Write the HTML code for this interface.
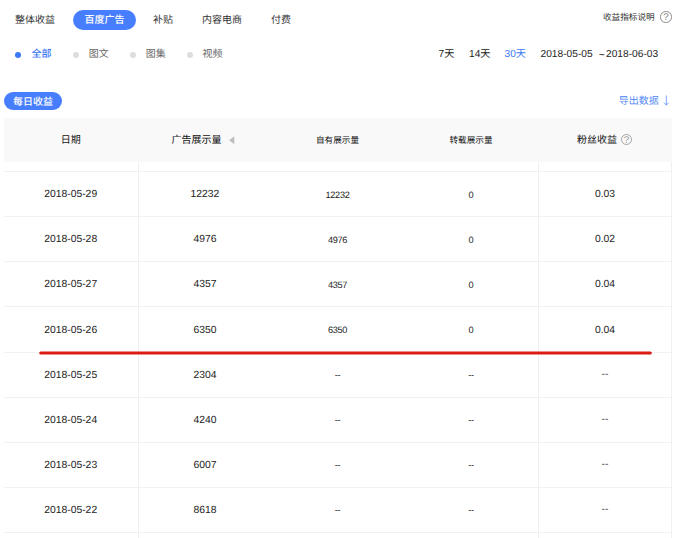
<!DOCTYPE html>
<html><head><meta charset="utf-8">
<style>
html,body{margin:0;padding:0;background:#fff;}
body{width:682px;height:538px;overflow:hidden;position:relative;font-family:"Liberation Sans","Noto Sans CJK SC",sans-serif;color:#333;font-size:10px;text-rendering:geometricPrecision;}
.abs{position:absolute;white-space:nowrap;}
.tab{top:13px;height:16px;line-height:16px;font-size:10px;color:#333;}
.tabsel{top:10px;left:73px;width:63px;height:20px;line-height:22px;font-weight:500;border-radius:10px;background:#477efd;color:#fff;text-align:center;font-size:10px;}
.sub{top:47.3px;height:16px;line-height:16px;font-size:10px;color:#666;}
.dot{position:absolute;width:6px;height:6px;border-radius:50%;background:#ddd;top:51.8px;}
.rng{top:47.3px;font-size:10.2px;line-height:16px;color:#222;}
.hdr{position:absolute;left:4px;top:118px;width:668px;height:44px;background:#f9f9f9;}
.th{position:absolute;top:118.8px;height:44px;line-height:44px;text-align:center;font-size:10px;color:#111;white-space:nowrap;font-weight:400;}
.th.sm{font-weight:400;font-size:8.6px;margin-top:-0.5px;}
.row{position:absolute;left:4px;width:668px;height:1px;background:#f1f1f1;}
.vl{position:absolute;top:162px;width:1px;height:376px;background:#f0f0f0;}
.td{position:absolute;text-align:center;color:#222;font-size:10.35px;}
.td.sm{font-size:9.2px;margin-top:-0.4px;letter-spacing:-0.3px;}
.td.hy{margin-top:-1px;color:#444;}
.td.sm.hs{margin-top:-1px;}
.q{position:absolute;width:9.4px;height:9.4px;border:0.7px solid #8c8c8c;border-radius:50%;font-size:9.8px;line-height:11px;text-align:center;color:#808080;}
</style></head><body>
<div class="abs tab" style="left:15px">整体收益</div>
<div class="abs tabsel">百度广告</div>
<div class="abs tab" style="left:153px">补贴</div>
<div class="abs tab" style="left:202px">内容电商</div>
<div class="abs tab" style="left:271px">付费</div>
<div class="abs" style="left:603px;top:10px;font-size:8.6px;color:#333;line-height:14px">收益指标说明</div>
<div class="q" style="left:660.2px;top:11.4px">?</div>

<div class="dot" style="left:15px;background:#3c78f5"></div>
<div class="abs sub" style="left:31.5px;color:#3c78f5;font-weight:500">全部</div>
<div class="dot" style="left:72.5px"></div>
<div class="abs sub" style="left:88.7px">图文</div>
<div class="dot" style="left:129.5px"></div>
<div class="abs sub" style="left:145.7px">图集</div>
<div class="dot" style="left:186.5px"></div>
<div class="abs sub" style="left:202.6px">视频</div>

<div class="abs rng" style="left:438.5px">7天</div>
<div class="abs rng" style="left:469px">14天</div>
<div class="abs rng" style="left:504.5px;color:#3c78f5">30天</div>
<div class="abs rng" style="left:540.5px">2018-05-05</div>
<div class="abs rng" style="left:598.7px;top:48.4px">~</div>
<div class="abs rng" style="left:606px">2018-06-03</div>

<div class="abs" style="left:4px;top:92.4px;width:58px;height:18px;line-height:21.4px;font-weight:500;border-radius:9px;background:#477efd;color:#fff;text-align:center;font-size:10px;">每日收益</div>
<div class="abs" style="left:618.7px;top:93.7px;font-size:10px;line-height:16px;color:#4a82f8;font-weight:350">导出数据</div>
<svg class="abs" style="left:661.2px;top:94.3px" width="12" height="13" viewBox="0 0 12 13"><path d="M5.3 1.5V11M3.1 8.7L5.3 11.2L7.5 8.7" fill="none" stroke="#6b9bfa" stroke-width="0.9"/></svg>

<div class="hdr"></div>
<div class="th" style="left:3.2px;width:135px">日期</div>
<div class="th" style="left:171.5px;text-align:left">广告展示量</div>
<svg class="abs" style="left:228px;top:135px" width="8" height="10" viewBox="0 0 8 10"><path d="M6.3 1.2V9.2L1.2 5.2Z" fill="#bdbdbd"/></svg>
<div class="th sm" style="left:271px;width:133px">自有展示量</div>
<div class="th sm" style="left:404px;width:134px">转载展示量</div>
<div class="th" style="left:577px;text-align:left">粉丝收益</div>
<div class="q" style="left:620.9px;top:134px;color:#999;border-color:#a6a6a6">?</div>

<div class="vl" style="left:138px"></div>
<div class="vl" style="left:538px"></div>
<div class="vl" style="left:671px"></div>
<div class="row" style="top:171px"></div>
<div class="row" style="top:216px"></div>
<div class="row" style="top:261px"></div>
<div class="row" style="top:306px"></div>
<div class="row" style="top:352px"></div>
<div class="row" style="top:397px"></div>
<div class="row" style="top:442px"></div>
<div class="row" style="top:487px"></div>
<div class="row" style="top:532px"></div>
<div class="td" style="left:3.2px;top:173.1px;width:135px;height:44px;line-height:44px">2018-05-29</div>
<div class="td" style="left:139px;top:173.1px;width:132px;height:44px;line-height:44px">12232</div>
<div class="td sm" style="left:271px;top:173.1px;width:133px;height:44px;line-height:44px">12232</div>
<div class="td sm" style="left:404px;top:173.1px;width:134px;height:44px;line-height:44px">0</div>
<div class="td" style="left:538px;top:173.1px;width:134px;height:44px;line-height:44px">0.03</div>
<div class="td" style="left:3.2px;top:218.1px;width:135px;height:44px;line-height:44px">2018-05-28</div>
<div class="td" style="left:139px;top:218.1px;width:132px;height:44px;line-height:44px">4976</div>
<div class="td sm" style="left:271px;top:218.1px;width:133px;height:44px;line-height:44px">4976</div>
<div class="td sm" style="left:404px;top:218.1px;width:134px;height:44px;line-height:44px">0</div>
<div class="td" style="left:538px;top:218.1px;width:134px;height:44px;line-height:44px">0.02</div>
<div class="td" style="left:3.2px;top:263.1px;width:135px;height:44px;line-height:44px">2018-05-27</div>
<div class="td" style="left:139px;top:263.1px;width:132px;height:44px;line-height:44px">4357</div>
<div class="td sm" style="left:271px;top:263.1px;width:133px;height:44px;line-height:44px">4357</div>
<div class="td sm" style="left:404px;top:263.1px;width:134px;height:44px;line-height:44px">0</div>
<div class="td" style="left:538px;top:263.1px;width:134px;height:44px;line-height:44px">0.04</div>
<div class="td" style="left:3.2px;top:308.1px;width:135px;height:45px;line-height:45px">2018-05-26</div>
<div class="td" style="left:139px;top:308.1px;width:132px;height:45px;line-height:45px">6350</div>
<div class="td sm" style="left:271px;top:308.1px;width:133px;height:45px;line-height:45px">6350</div>
<div class="td sm" style="left:404px;top:308.1px;width:134px;height:45px;line-height:45px">0</div>
<div class="td" style="left:538px;top:308.1px;width:134px;height:45px;line-height:45px">0.04</div>
<div class="td" style="left:3.2px;top:354.1px;width:135px;height:44px;line-height:44px">2018-05-25</div>
<div class="td" style="left:139px;top:354.1px;width:132px;height:44px;line-height:44px">2304</div>
<div class="td sm hs" style="left:271px;top:354.1px;width:133px;height:44px;line-height:44px">--</div>
<div class="td sm hs" style="left:404px;top:354.1px;width:134px;height:44px;line-height:44px">--</div>
<div class="td hy" style="left:538px;top:354.1px;width:134px;height:44px;line-height:44px">--</div>
<div class="td" style="left:3.2px;top:399.1px;width:135px;height:44px;line-height:44px">2018-05-24</div>
<div class="td" style="left:139px;top:399.1px;width:132px;height:44px;line-height:44px">4240</div>
<div class="td sm hs" style="left:271px;top:399.1px;width:133px;height:44px;line-height:44px">--</div>
<div class="td sm hs" style="left:404px;top:399.1px;width:134px;height:44px;line-height:44px">--</div>
<div class="td hy" style="left:538px;top:399.1px;width:134px;height:44px;line-height:44px">--</div>
<div class="td" style="left:3.2px;top:444.1px;width:135px;height:44px;line-height:44px">2018-05-23</div>
<div class="td" style="left:139px;top:444.1px;width:132px;height:44px;line-height:44px">6007</div>
<div class="td sm hs" style="left:271px;top:444.1px;width:133px;height:44px;line-height:44px">--</div>
<div class="td sm hs" style="left:404px;top:444.1px;width:134px;height:44px;line-height:44px">--</div>
<div class="td hy" style="left:538px;top:444.1px;width:134px;height:44px;line-height:44px">--</div>
<div class="td" style="left:3.2px;top:489.1px;width:135px;height:44px;line-height:44px">2018-05-22</div>
<div class="td" style="left:139px;top:489.1px;width:132px;height:44px;line-height:44px">8618</div>
<div class="td sm hs" style="left:271px;top:489.1px;width:133px;height:44px;line-height:44px">--</div>
<div class="td sm hs" style="left:404px;top:489.1px;width:134px;height:44px;line-height:44px">--</div>
<div class="td hy" style="left:538px;top:489.1px;width:134px;height:44px;line-height:44px">--</div>
<svg class="abs" style="left:0;top:340px" width="682" height="30" viewBox="0 0 682 30"><line x1="40.7" y1="12.95" x2="650.3" y2="12.95" stroke="#da1c12" stroke-width="3.05" stroke-linecap="round"/></svg>
</body></html>
